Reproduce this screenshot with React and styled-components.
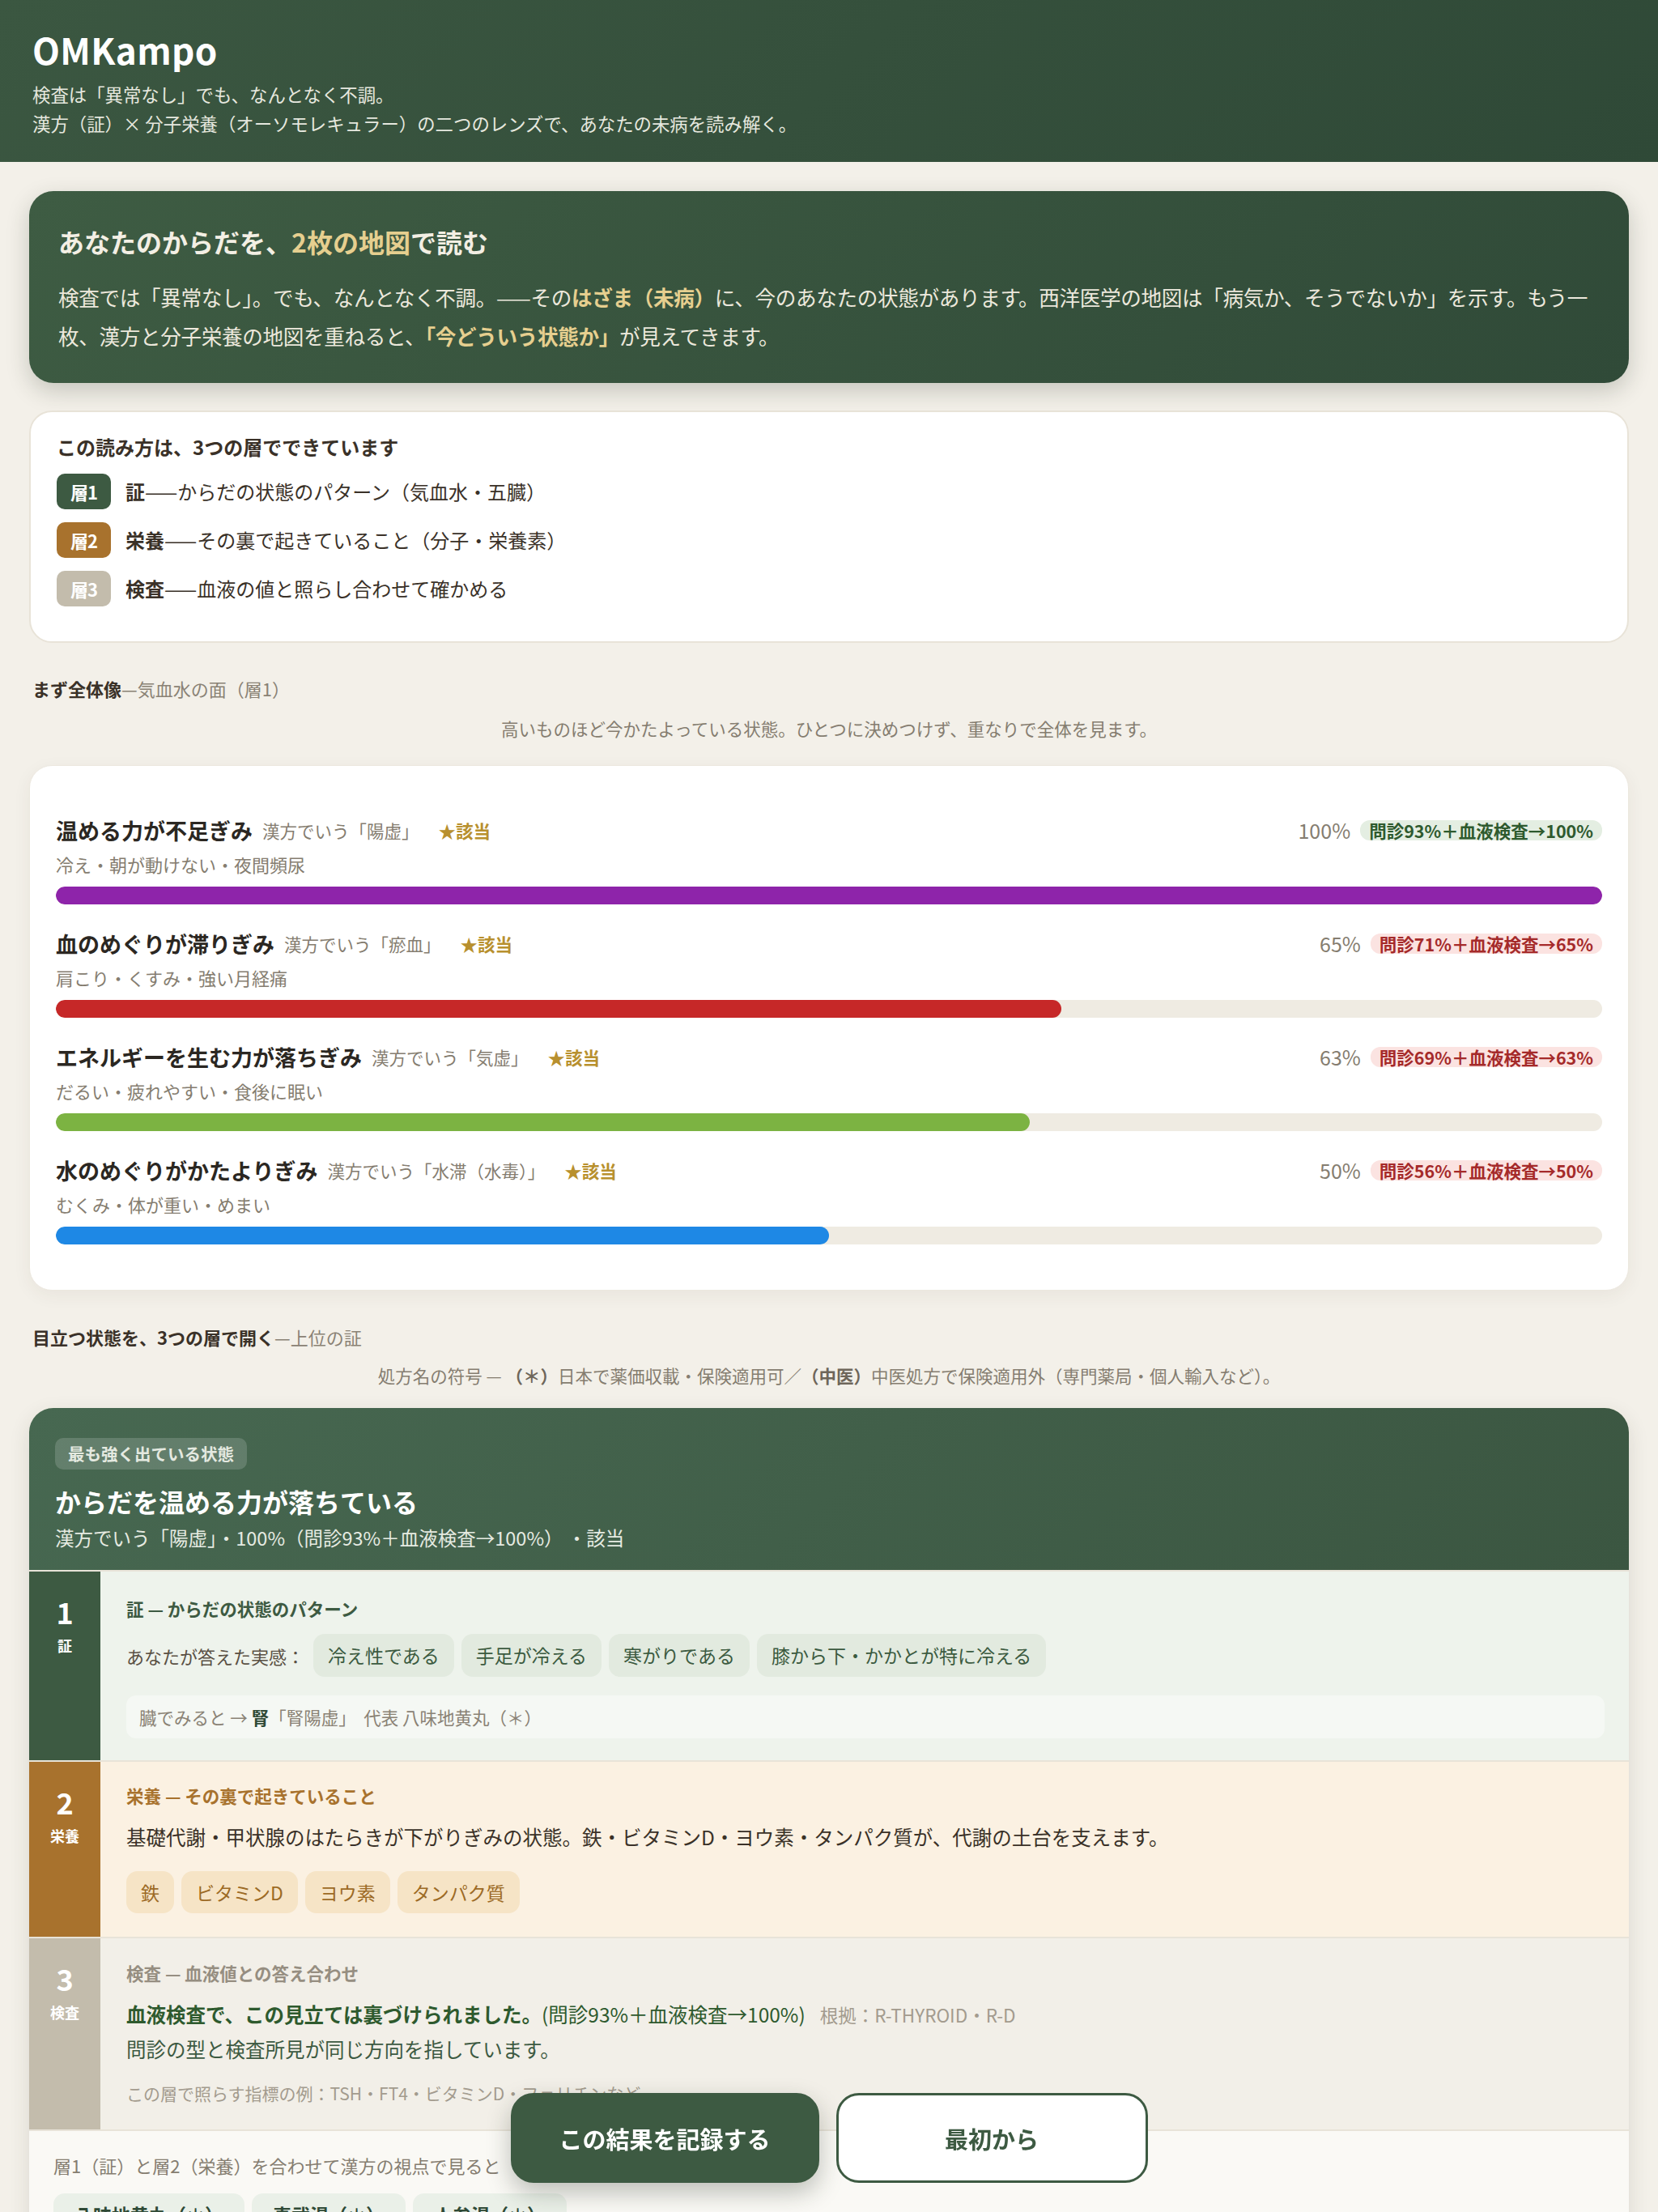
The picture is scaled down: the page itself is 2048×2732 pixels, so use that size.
import React from "react";
import styled, { createGlobalStyle } from "styled-components";

const GlobalStyle = createGlobalStyle`
  html, body {
    margin: 0;
    padding: 0;
    background: #f3f0e9;
    font-family: "Noto Sans CJK JP", "Noto Sans", sans-serif;
    color: #3a3128;
  }
  * { box-sizing: border-box; }
`;

const tones = {
  green: { index: "#3d5a42", bg: "#eef3ec", heading: "#3d5a42", tagBg: "#e2eadf", tagText: "#3b5a40" },
  ochre: { index: "#a8722d", bg: "#fbf1e2", heading: "#a8722d", tagBg: "#f6e4c6", tagText: "#9c6a25" },
  stone: { index: "#c3bcac", bg: "#f2efe8", heading: "#968e81", tagBg: "#e9e5dc", tagText: "#7a7266" },
};

const pills = {
  good: { bg: "#e4eee2", fg: "#2e5a2e" },
  warn: { bg: "#fbe3e1", fg: "#a52a2a" },
};

const bars = [
  { name: "温める力が不足ぎみ", alias: "陽虚", sym: "冷え・朝が動けない・夜間頻尿", pct: 100, color: "#8e24aa", pill: "問診93%＋血液検査→100%", tone: "good" },
  { name: "血のめぐりが滞りぎみ", alias: "瘀血", sym: "肩こり・くすみ・強い月経痛", pct: 65, color: "#c62828", pill: "問診71%＋血液検査→65%", tone: "warn" },
  { name: "エネルギーを生む力が落ちぎみ", alias: "気虚", sym: "だるい・疲れやすい・食後に眠い", pct: 63, color: "#7cb342", pill: "問診69%＋血液検査→63%", tone: "warn" },
  { name: "水のめぐりがかたよりぎみ", alias: "水滞（水毒）", sym: "むくみ・体が重い・めまい", pct: 50, color: "#1e88e5", pill: "問診56%＋血液検査→50%", tone: "warn" },
];

const Header = styled.header`
  background: linear-gradient(135deg, #3b5741 0%, #2f4937 100%);
  padding: 36px 40px 30px;
  color: #fff;
`;

const Brand = styled.h1`
  margin: 0;
  font-size: 44px;
  line-height: 50px;
  font-weight: 700;
  letter-spacing: 0.4px;
`;

const Tagline = styled.p`
  margin: 12px 0 0;
  font-size: 22.4px;
  line-height: 36px;
  color: #e6e8df;
`;

const Main = styled.main`
  padding: 36px 36px 220px;
  display: flex;
  flex-direction: column;
`;

const HeroCard = styled.section`
  background: linear-gradient(135deg, #3e5c43 0%, #304a38 100%);
  border-radius: 30px;
  padding: 40px 36px 34px;
  box-shadow: 0 10px 28px rgba(40, 50, 35, 0.22);
`;

const HeroTitle = styled.h2`
  margin: 0;
  font-size: 32px;
  line-height: 45px;
  font-weight: 700;
  color: #f3efe4;
`;

const HeroText = styled.p`
  margin: 22px 0 0;
  font-size: 25.6px;
  line-height: 48px;
  letter-spacing: -0.35px;
  color: #ece8dc;
`;

const Gold = styled.strong`
  color: #e6cf8f;
  font-weight: 700;
`;

const LayersCard = styled.section`
  margin-top: 34px;
  background: #fff;
  border: 2px solid #e8e3d8;
  border-radius: 28px;
  padding: 26px 32px 43px;
`;

const LayersTitle = styled.h3`
  margin: 0;
  font-size: 24px;
  line-height: 34px;
  font-weight: 700;
  color: #3a3128;
`;

const LayerList = styled.ul`
  list-style: none;
  margin: 16px 0 0;
  padding: 0;
  display: flex;
  flex-direction: column;
  gap: 16px;
`;

const LayerItem = styled.li`
  display: flex;
  align-items: center;
  gap: 18px;
  font-size: 24px;
  line-height: 44px;
  color: #3a3128;
  b { font-weight: 700; }
`;

const LayerBadge = styled.span`
  width: 67px;
  height: 44px;
  border-radius: 10px;
  background: ${({ $tone }) => tones[$tone].index};
  color: #fff;
  font-size: 22px;
  font-weight: 700;
  display: flex;
  align-items: center;
  justify-content: center;
  letter-spacing: -1px;
`;

const SectionLabel = styled.h4`
  margin: ${({ $gap }) => $gap}px 0 0;
  padding-left: 4px;
  font-size: 22px;
  line-height: 32px;
  font-weight: 400;
  color: #8a8275;
  b { color: #3a3128; font-weight: 700; }
`;

const SectionNote = styled.p`
  margin: ${({ $gap }) => $gap}px 0 0;
  text-align: center;
  font-size: 21.5px;
  line-height: 32px;
  color: #857d70;
  b { color: #6e665a; font-weight: 700; }
`;

const BarsCard = styled.section`
  margin-top: 29px;
  background: #fff;
  border: 1px solid #ece8df;
  border-radius: 28px;
  padding: 59px 32px 56px;
  display: flex;
  flex-direction: column;
  gap: 28px;
  box-shadow: 0 6px 22px rgba(60, 50, 30, 0.06);
`;

const BarRow = styled.div`
  display: flex;
  flex-direction: column;
`;

const BarHead = styled.div`
  height: 40px;
  display: flex;
  align-items: center;
  gap: 12px;
`;

const BarName = styled.span`
  font-size: 27px;
  font-weight: 700;
  color: #2b2722;
`;

const BarAlias = styled.span`
  font-size: 21.5px;
  color: #857d70;
`;

const BarMatch = styled.span`
  margin-left: 12px;
  font-size: 21.5px;
  font-weight: 700;
  color: #b8902e;
`;

const BarScore = styled.span`
  margin-left: auto;
  font-size: 25px;
  color: #857d70;
  font-weight: 400;
`;

const ScorePill = styled.span`
  height: 25px;
  line-height: 25px;
  padding: 0 11px;
  border-radius: 12px;
  font-size: 21.5px;
  font-weight: 700;
  background: ${({ $tone }) => pills[$tone].bg};
  color: ${({ $tone }) => pills[$tone].fg};
`;

const Symptoms = styled.div`
  margin-top: 6px;
  font-size: 22px;
  line-height: 32px;
  color: #857d70;
`;

const Track = styled.div`
  margin-top: 12px;
  height: 22px;
  border-radius: 11px;
  background: #efebe2;
  overflow: hidden;
`;

const Fill = styled.div`
  height: 100%;
  border-radius: 11px;
  background: ${({ $color }) => $color};
`;

const DetailCard = styled.section`
  margin-top: 24px;
  border-radius: 30px;
  overflow: hidden;
  background: #e8e3d8;
  box-shadow: 0 8px 26px rgba(50, 50, 35, 0.12);
  display: flex;
  flex-direction: column;
  gap: 2px;
`;

const DetailHead = styled.div`
  background: linear-gradient(135deg, #476851 0%, #3b5641 100%);
  padding: 37px 32px 23px;
  color: #fff;
`;

const DetailChip = styled.span`
  display: inline-block;
  height: 39px;
  line-height: 39px;
  padding: 0 16px;
  border-radius: 10px;
  background: rgba(255, 255, 255, 0.16);
  color: #e4e9e0;
  font-size: 20.5px;
  font-weight: 700;
`;

const DetailTitle = styled.h3`
  margin: 17px 0 0;
  font-size: 32px;
  line-height: 45px;
  font-weight: 700;
  color: #fff;
`;

const DetailSub = styled.p`
  margin: 5px 0 0;
  font-size: 23.5px;
  line-height: 34px;
  color: #e6ebe2;
`;

const LayerRow = styled.div`
  display: grid;
  grid-template-columns: 88px 1fr;
  background: ${({ $tone }) => tones[$tone].bg};
`;

const LayerIndex = styled.div`
  background: ${({ $tone }) => tones[$tone].index};
  color: #fff;
  display: flex;
  flex-direction: column;
  align-items: center;
  padding-top: 29px;
`;

const IndexNum = styled.span`
  font-size: 36px;
  line-height: 40px;
  font-weight: 700;
`;

const IndexLabel = styled.span`
  margin-top: 10px;
  font-size: 18px;
  line-height: 24px;
  font-weight: 700;
`;

const LayerBody = styled.div`
  padding: ${({ $pad }) => $pad};
  display: flex;
  flex-direction: column;
  align-items: flex-start;
`;

const LayerHeading = styled.h5`
  margin: 0;
  font-size: 21.5px;
  line-height: 32px;
  font-weight: 700;
  color: ${({ $tone }) => tones[$tone].heading};
`;

const TagRow = styled.div`
  margin-top: ${({ $gap }) => $gap}px;
  display: flex;
  align-items: center;
  flex-wrap: wrap;
  gap: 9px;
`;

const TagLead = styled.span`
  font-size: 22px;
  color: #5a5044;
  margin-right: 2px;
`;

const Tag = styled.span`
  height: ${({ $h }) => $h}px;
  line-height: ${({ $h }) => $h}px;
  padding: 0 18px;
  border-radius: 14px;
  font-size: 23px;
  background: ${({ $tone }) => tones[$tone].tagBg};
  color: ${({ $tone }) => tones[$tone].tagText};
`;

const InfoBox = styled.div`
  margin-top: 23px;
  align-self: stretch;
  height: 53px;
  display: flex;
  align-items: center;
  padding: 0 16px;
  border-radius: 12px;
  background: #f5f8f4;
  font-size: 21.5px;
  color: #8a8275;
  white-space: pre;
  b { color: #2f4a36; font-weight: 700; }
`;

const BodyText = styled.p`
  margin: ${({ $gap }) => $gap}px 0 0;
  font-size: 24.5px;
  line-height: 36px;
  color: ${({ $color }) => $color || "#3a3128"};
  b { font-weight: 700; color: #2e5a2e; }
  small { font-size: 22.5px; color: #a39b8e; margin-left: 18px; }
`;

const Hint = styled.p`
  margin: 20px 0 0;
  font-size: 21px;
  line-height: 32px;
  color: #a39b8e;
`;

const FormulaSection = styled.div`
  background: #faf9f5;
  padding: 26px 30px 36px;
`;

const FormulaLead = styled.p`
  margin: 0;
  font-size: 22px;
  line-height: 32px;
  color: #857d70;
`;

const FormulaList = styled.div`
  margin-top: 19px;
  display: flex;
  gap: 9px;
  flex-wrap: wrap;
`;

const FormulaChip = styled.span`
  height: 53px;
  line-height: 53px;
  padding: 0 26px;
  border-radius: 14px;
  background: #eaf0e8;
  color: #2f4a36;
  font-size: 23px;
  font-weight: 700;
`;

const ActionBar = styled.div`
  position: fixed;
  left: 0;
  right: 0;
  bottom: 36px;
  display: flex;
  justify-content: center;
  gap: 21px;
  pointer-events: none;
`;

const ActionButton = styled.button`
  pointer-events: auto;
  width: ${({ $w }) => $w}px;
  height: 111px;
  border-radius: 28px;
  font-family: inherit;
  font-size: 29px;
  font-weight: 700;
  cursor: pointer;
  border: 3px solid #3d5a42;
  background: ${({ $primary }) => ($primary ? "#3d5a42" : "#fff")};
  color: ${({ $primary }) => ($primary ? "#fff" : "#3d5a42")};
  box-shadow: ${({ $primary }) =>
    $primary ? "0 12px 30px rgba(30, 40, 25, 0.28)" : "none"};
`;

export default function App() {
  return (
    <>
      <GlobalStyle />
      <Header>
        <Brand>OMKampo</Brand>
        <Tagline>
          検査は「異常なし」でも、なんとなく不調。
          <br />
          漢方（証）× 分子栄養（オーソモレキュラー）の二つのレンズで、あなたの未病を読み解く。
        </Tagline>
      </Header>
      <Main>
        <HeroCard>
          <HeroTitle>
            あなたのからだを、<Gold>2枚の地図</Gold>で読む
          </HeroTitle>
          <HeroText>
            検査では「異常なし」。でも、なんとなく不調。——その<Gold>はざま（未病）</Gold>に、今のあなたの状態があります。西洋医学の地図は「病気か、そうでないか」を示す。もう一枚、漢方と分子栄養の地図を重ねると、<Gold>「今どういう状態か」</Gold>が見えてきます。
          </HeroText>
        </HeroCard>

        <LayersCard>
          <LayersTitle>この読み方は、3つの層でできています</LayersTitle>
          <LayerList>
            <LayerItem>
              <LayerBadge $tone="green">層1</LayerBadge>
              <span><b>証</b>——からだの状態のパターン（気血水・五臓）</span>
            </LayerItem>
            <LayerItem>
              <LayerBadge $tone="ochre">層2</LayerBadge>
              <span><b>栄養</b>——その裏で起きていること（分子・栄養素）</span>
            </LayerItem>
            <LayerItem>
              <LayerBadge $tone="stone">層3</LayerBadge>
              <span><b>検査</b>——血液の値と照らし合わせて確かめる</span>
            </LayerItem>
          </LayerList>
        </LayersCard>

        <SectionLabel $gap={40}>
          <b>まず全体像</b>—気血水の面（層1）
        </SectionLabel>
        <SectionNote $gap={18}>
          高いものほど今かたよっている状態。ひとつに決めつけず、重なりで全体を見ます。
        </SectionNote>

        <BarsCard>
          {bars.map((b) => (
            <BarRow key={b.name}>
              <BarHead>
                <BarName>{b.name}</BarName>
                <BarAlias>漢方でいう「{b.alias}」</BarAlias>
                <BarMatch>★該当</BarMatch>
                <BarScore>{b.pct}%</BarScore>
                <ScorePill $tone={b.tone}>{b.pill}</ScorePill>
              </BarHead>
              <Symptoms>{b.sym}</Symptoms>
              <Track>
                <Fill $color={b.color} style={{ width: `${b.pct}%` }} />
              </Track>
            </BarRow>
          ))}
        </BarsCard>

        <SectionLabel $gap={41}>
          <b>目立つ状態を、3つの層で開く</b>—上位の証
        </SectionLabel>
        <SectionNote $gap={16}>
          処方名の符号 — <b>（＊）</b>日本で薬価収載・保険適用可／<b>（中医）</b>中医処方で保険適用外（専門薬局・個人輸入など）。
        </SectionNote>

        <DetailCard>
          <DetailHead>
            <DetailChip>最も強く出ている状態</DetailChip>
            <DetailTitle>からだを温める力が落ちている</DetailTitle>
            <DetailSub>漢方でいう「陽虚」・100%（問診93%＋血液検査→100%） ・該当</DetailSub>
          </DetailHead>

          <LayerRow $tone="green">
            <LayerIndex $tone="green">
              <IndexNum>1</IndexNum>
              <IndexLabel>証</IndexLabel>
            </LayerIndex>
            <LayerBody $pad="30px 30px 27px 32px">
              <LayerHeading $tone="green">証 — からだの状態のパターン</LayerHeading>
              <TagRow $gap={15}>
                <TagLead>あなたが答えた実感：</TagLead>
                {["冷え性である", "手足が冷える", "寒がりである", "膝から下・かかとが特に冷える"].map((t) => (
                  <Tag key={t} $tone="green" $h={53}>{t}</Tag>
                ))}
              </TagRow>
              <InfoBox>
                {"臓でみると → "}<b>腎</b>{"「腎陽虚」  代表 八味地黄丸（＊）"}
              </InfoBox>
            </LayerBody>
          </LayerRow>

          <LayerRow $tone="ochre">
            <LayerIndex $tone="ochre">
              <IndexNum>2</IndexNum>
              <IndexLabel>栄養</IndexLabel>
            </LayerIndex>
            <LayerBody $pad="26px 30px 29px 32px">
              <LayerHeading $tone="ochre">栄養 — その裏で起きていること</LayerHeading>
              <BodyText $gap={17}>
                基礎代謝・甲状腺のはたらきが下がりぎみの状態。鉄・ビタミンD・ヨウ素・タンパク質が、代謝の土台を支えます。
              </BodyText>
              <TagRow $gap={24}>
                {["鉄", "ビタミンD", "ヨウ素", "タンパク質"].map((t) => (
                  <Tag key={t} $tone="ochre" $h={52}>{t}</Tag>
                ))}
              </TagRow>
            </LayerBody>
          </LayerRow>

          <LayerRow $tone="stone">
            <LayerIndex $tone="stone">
              <IndexNum>3</IndexNum>
              <IndexLabel>検査</IndexLabel>
            </LayerIndex>
            <LayerBody $pad="27px 30px 29px 32px">
              <LayerHeading $tone="stone">検査 — 血液値との答え合わせ</LayerHeading>
              <BodyText $gap={17} $color="#2e5a2e">
                <b>血液検査で、この見立ては裏づけられました。</b>(問診93%＋血液検査→100%)
                <small>根拠：R-THYROID・R-D</small>
              </BodyText>
              <BodyText $gap={7} $color="#3d5a42">
                問診の型と検査所見が同じ方向を指しています。
              </BodyText>
              <Hint>この層で照らす指標の例：TSH・FT4・ビタミンD・フェリチンなど</Hint>
            </LayerBody>
          </LayerRow>

          <FormulaSection>
            <FormulaLead>層1（証）と層2（栄養）を合わせて漢方の視点で見ると</FormulaLead>
            <FormulaList>
              {["八味地黄丸（＊）", "真武湯（＊）", "人参湯（＊）"].map((f) => (
                <FormulaChip key={f}>{f}</FormulaChip>
              ))}
            </FormulaList>
          </FormulaSection>
        </DetailCard>
      </Main>

      <ActionBar>
        <ActionButton $primary $w={381}>この結果を記録する</ActionButton>
        <ActionButton $w={385}>最初から</ActionButton>
      </ActionBar>
    </>
  );
}
